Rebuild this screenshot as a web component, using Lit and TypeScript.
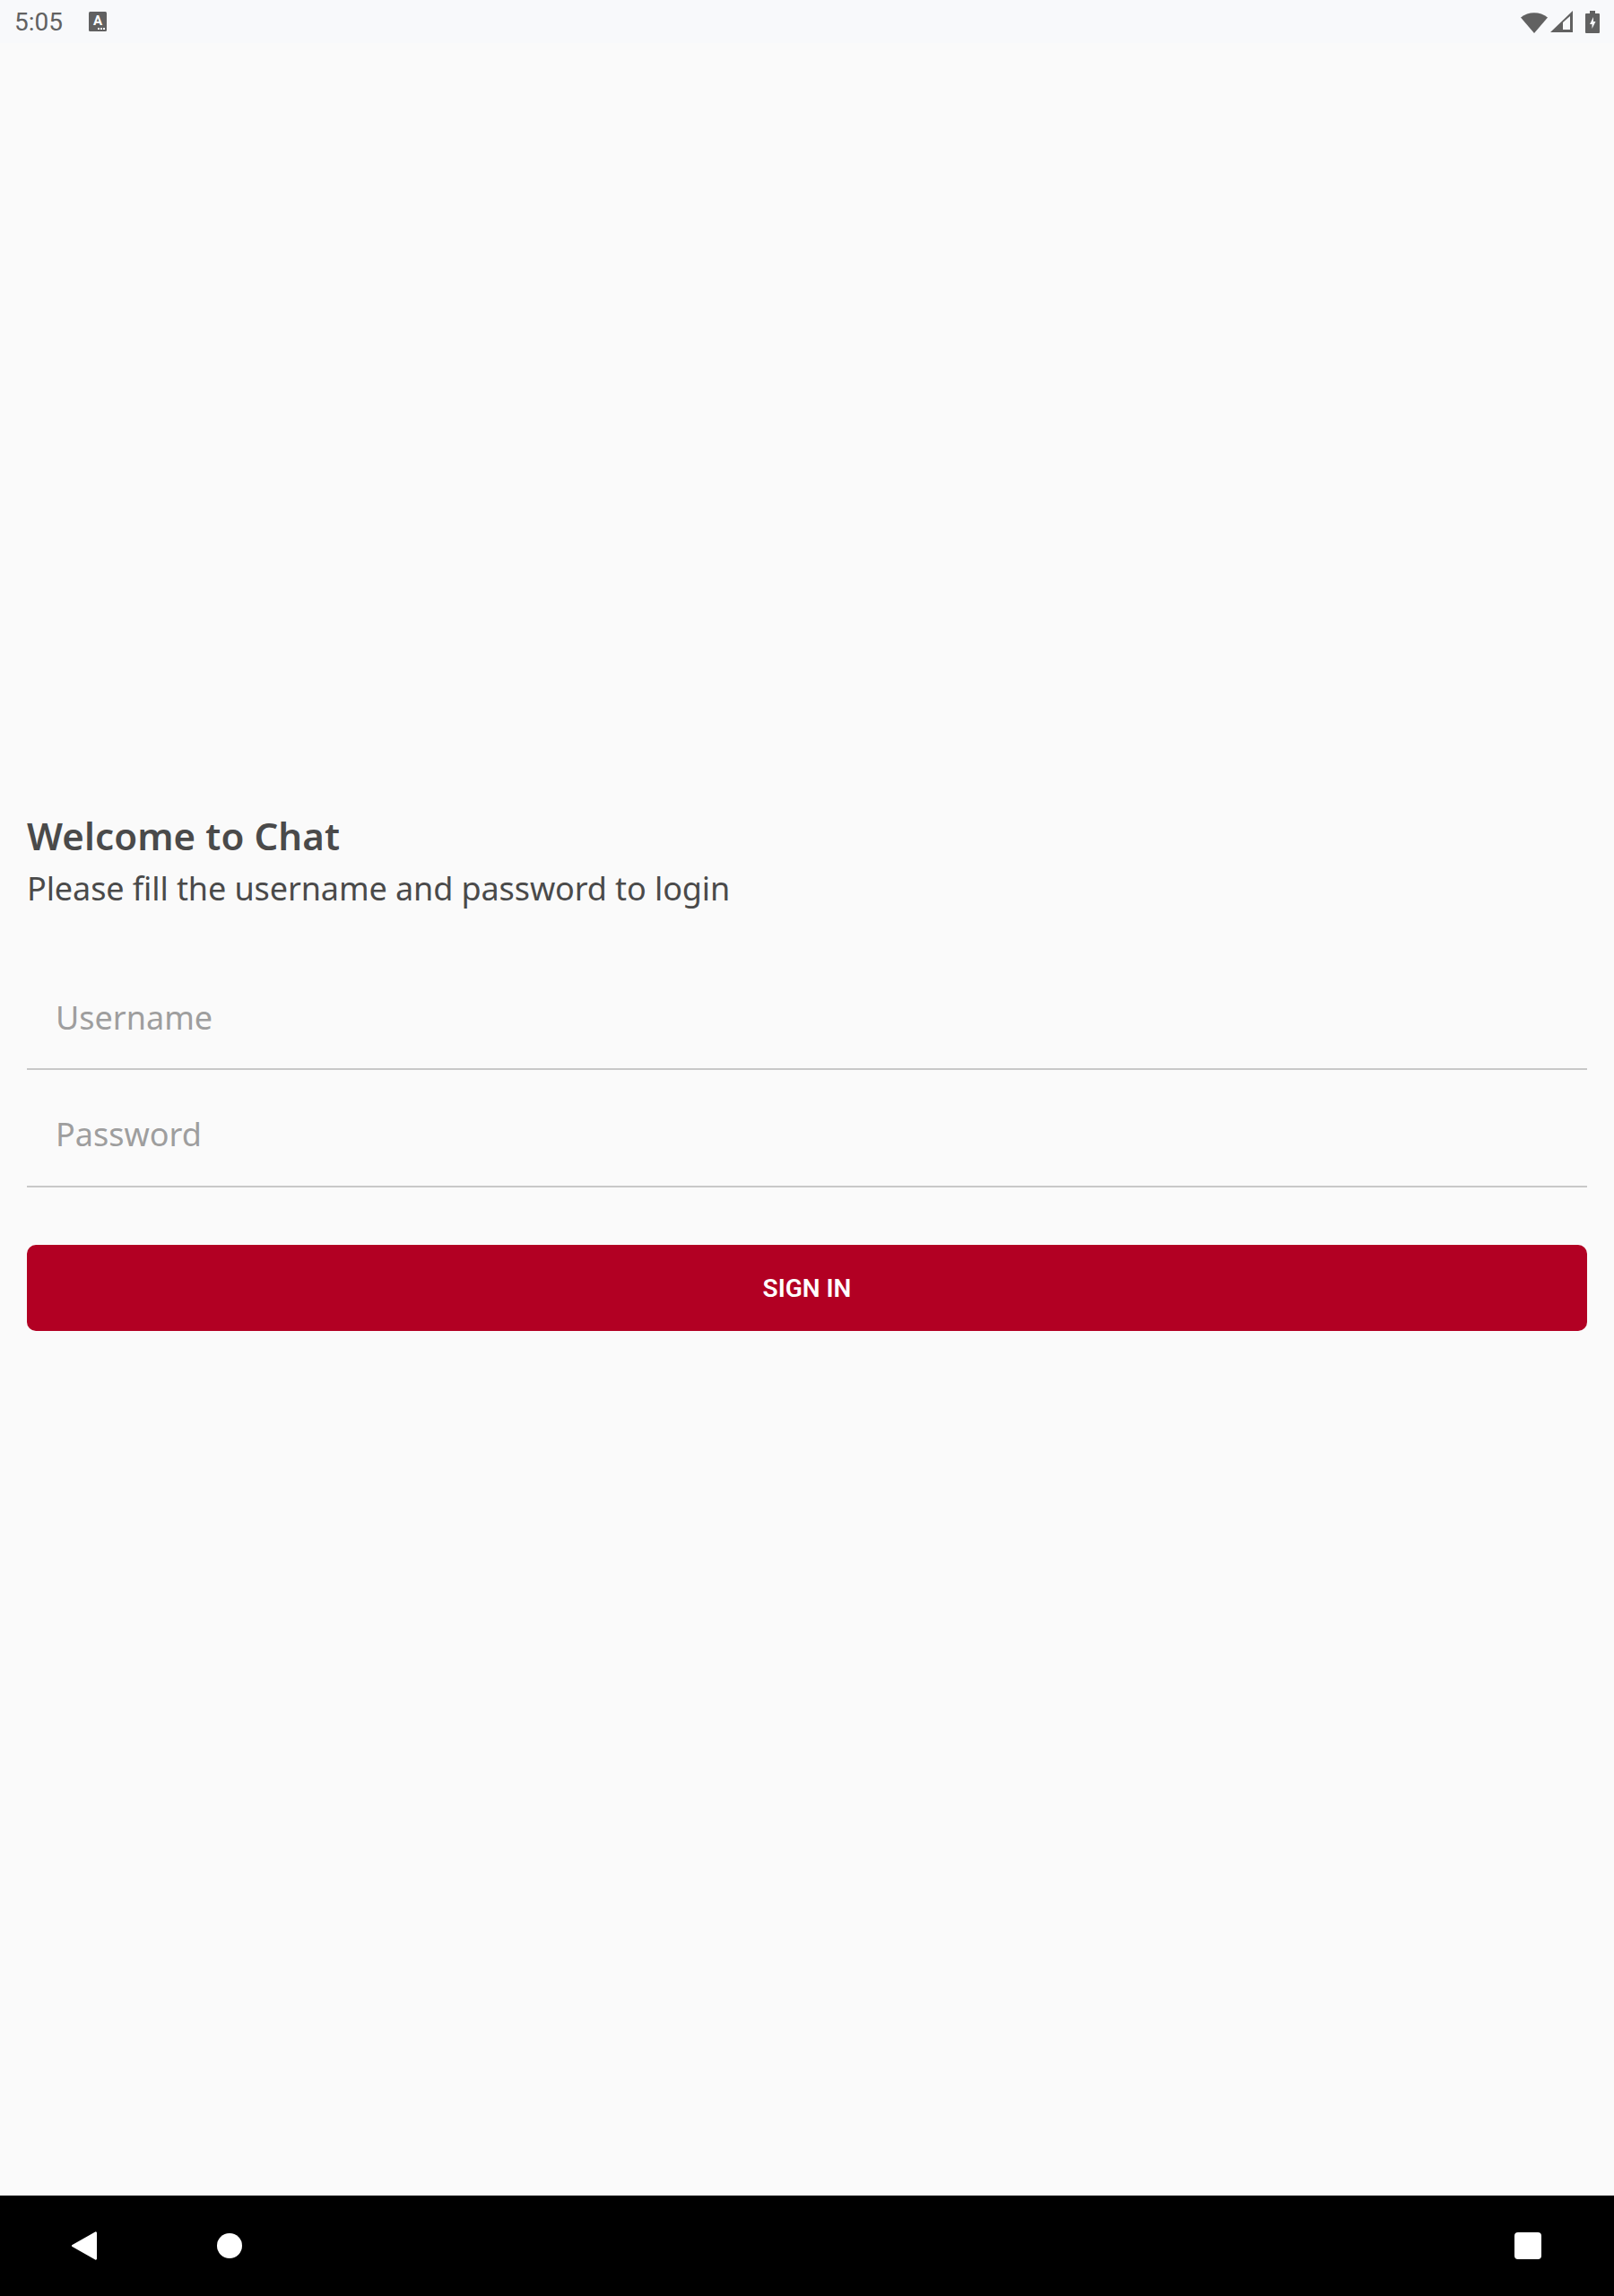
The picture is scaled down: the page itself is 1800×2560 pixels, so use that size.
import { LitElement, css, html } from 'lit'
import { customElement } from 'lit/decorators.js'

@customElement('app-root')
export class AppRoot extends LitElement {
  render() {
    return html`
      <div class="status">
        <span class="time">5:05</span>
        <svg class="a-icon" width="20" height="22" viewBox="0 0 20 22">
          <rect width="20" height="22" rx="1.5" fill="#616161" />
          <text x="10" y="15" text-anchor="middle" class="a-letter">A</text>
          <rect x="10" y="18" width="2" height="2" fill="#fff" />
          <rect x="13" y="18" width="2" height="2" fill="#fff" />
          <rect x="16" y="18" width="2" height="2" fill="#fff" />
        </svg>
        <span class="spacer"></span>
        <svg width="30" height="25" viewBox="0 0 30 25">
          <path fill="#616161" d="M0 7.5C8.500.5 21.500.5 30 7.500L15 25z" />
        </svg>
        <svg class="signal" width="25" height="24" viewBox="0 0 25 24">
          <path fill-rule="evenodd" fill="#616161" d="M25 0v24H0zM14 13l8-7v15h-8z" />
        </svg>
        <svg class="battery" width="16" height="25" viewBox="0 0 16 25">
          <path fill="#616161" d="M5 0h6v3h4a1 1 0 0 1 1 1v20a1 1 0 0 1-1 1H1a1 1 0 0 1-1-1V4a1 1 0 0 1 1-1h4z" />
          <path fill="#f8f9fb" d="M9 7L5 15h2.500v5L11.500 12H9z" />
        </svg>
      </div>
      <main class="content">
        <h1>Welcome to Chat</h1>
        <p>Please fill the username and password to login</p>
        <div class="field username">Username</div>
        <div class="field password">Password</div>
        <button>SIGN IN</button>
      </main>
      <div class="nav">
        <svg width="28" height="32" viewBox="0 0 28 32">
          <path fill="#fff" d="M28 1.500v29a1.200 1.200 0 0 1-1.800 1L.6 17a1.200 1.200 0 0 1 0-2L26.200.5a1.200 1.200 0 0 1 1.800 1z" />
        </svg>
        <span class="home"></span>
        <span class="spacer"></span>
        <span class="recent"></span>
      </div>
    `
  }

  static styles = css`
    :host {
      display: flex;
      flex-direction: column;
      height: 2560px;
      background: #fafafa;
      font-family: 'Noto Sans', sans-serif;
    }
    .status {
      display: flex;
      align-items: center;
      height: 48px;
      padding: 0 16px;
      background: #f8f9fb;
      box-sizing: border-box;
    }
    .time {
      font-family: Roboto, sans-serif;
      font-size: 28px;
      color: #616161;
    }
    .a-icon {
      margin-left: 29px;
    }
    .a-letter {
      font: 700 15px Roboto, sans-serif;
      fill: #fff;
    }
    .spacer {
      flex: 1;
    }
    .signal {
      margin-left: 3px;
    }
    .battery {
      margin-left: 14px;
    }
    .content {
      flex: 1;
      display: flex;
      flex-direction: column;
      padding: 854px 30px 0;
    }
    h1 {
      margin: 0;
      font-size: 42px;
      line-height: 60px;
      font-weight: 600;
      letter-spacing: 0.1px;
      color: #4a4a4a;
    }
    p {
      margin: 0 0 44px;
      font-size: 36px;
      line-height: 58px;
      letter-spacing: -0.1px;
      color: #4a4a4a;
    }
    .field {
      box-sizing: border-box;
      padding: 0 32px;
      border-bottom: 2px solid #c8c8c8;
      font-size: 36px;
      line-height: 60px;
      color: #9e9e9e;
    }
    .username {
      height: 129px;
      padding-top: 41px;
    }
    .password {
      height: 131px;
      padding-top: 42px;
    }
    button {
      margin-top: 64px;
      height: 96px;
      border: none;
      border-radius: 10px;
      background: #b20023;
      color: #fff;
      font: 600 28px Roboto, sans-serif;
    }
    .nav {
      display: flex;
      align-items: center;
      height: 112px;
      padding: 0 81px 0 80px;
      background: #000;
    }
    .home {
      width: 28px;
      height: 28px;
      margin-left: 134px;
      border-radius: 50%;
      background: #fff;
    }
    .recent {
      width: 30px;
      height: 30px;
      border-radius: 4px;
      background: #fff;
    }
  `
}
